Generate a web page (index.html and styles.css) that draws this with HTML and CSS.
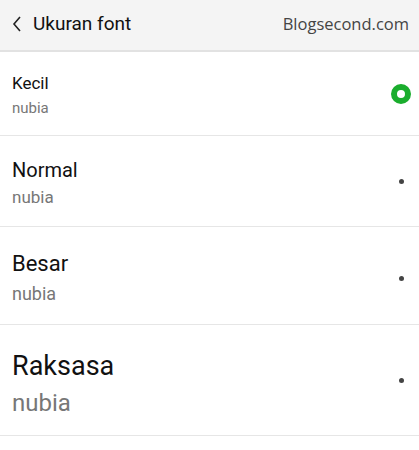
FILE: index.html
```html
<!DOCTYPE html>
<html>
<head>
<meta charset="utf-8">
<title>Ukuran font</title>
<link rel="stylesheet" href="styles.css">
</head>
<body>
<div class="topbar">
  <div class="back">
    <svg width="10" height="16" viewBox="0 0 10 16"><path d="M8 1 L2 8 L8 15" fill="none" stroke="#222" stroke-width="1.6"/></svg>
  </div>
  <div class="title">Ukuran font</div>
  <div class="brand">Blogsecond.com</div>
</div>
<div class="list">
  <div class="item item1">
    <div class="text">
      <div class="name">Kecil</div>
      <div class="sub">nubia</div>
    </div>
    <div class="radio on"></div>
  </div>
  <div class="item item2">
    <div class="text">
      <div class="name">Normal</div>
      <div class="sub">nubia</div>
    </div>
    <div class="radio"></div>
  </div>
  <div class="item item3">
    <div class="text">
      <div class="name">Besar</div>
      <div class="sub">nubia</div>
    </div>
    <div class="radio"></div>
  </div>
  <div class="item item4">
    <div class="text">
      <div class="name">Raksasa</div>
      <div class="sub">nubia</div>
    </div>
    <div class="radio"></div>
  </div>
</div>
</body>
</html>
```

FILE: styles.css
```css
body{margin:0; background:#fff; font-family:Roboto, "Noto Sans", sans-serif; color:#111;}
.topbar{height:50px; background:#f4f4f4; border-bottom:2px solid #e2e2e2; display:flex; align-items:center; padding:0 12px 0 12px;}
.back{width:12px; height:16px; display:flex; align-items:center; margin-right:9px; margin-top:-2px;}
.title{font-size:19px; color:#111; flex:1; margin-top:-4px;}
.brand{font-family:"Open Sans", sans-serif; font-size:16.5px; color:#444; margin-top:-4px; margin-right:-2px;}
.item{display:flex; align-items:center; padding:0 14px 0 12px; border-bottom:1px solid #e6e6e6;}
.text{flex:1; display:flex; flex-direction:column;}
.sub{color:#777;}
.item1{height:83px;}
.item1 .text{margin-top:4px;}
.item1 .name{font-size:17px; line-height:22px;}
.item1 .sub{font-size:15px; line-height:22px; margin-top:3px;}
.item2{height:90px;}
.item2 .text{margin-top:5px;}
.item2 .name{font-size:20px; line-height:26px;}
.item2 .sub{font-size:17px; line-height:26px; margin-top:1px;}
.item3{height:97px;}
.item3 .text{margin-top:7px;}
.item3 .name{font-size:22px; line-height:30px;}
.item3 .sub{font-size:18px; line-height:30px;}
.item3 .radio{margin-top:6px;}
.item4{height:110px;}
.item4 .text{margin-top:8px;}
.item4 .name{font-size:27px; line-height:38px;}
.item4 .sub{font-size:24px; line-height:37px;}
.radio{width:5px; height:5px; border-radius:50%; background:#444; margin-right:1px;}
.radio.on{width:8px; height:8px; background:#fff; border:6px solid #1aad2d; margin-right:-6px;}
```
